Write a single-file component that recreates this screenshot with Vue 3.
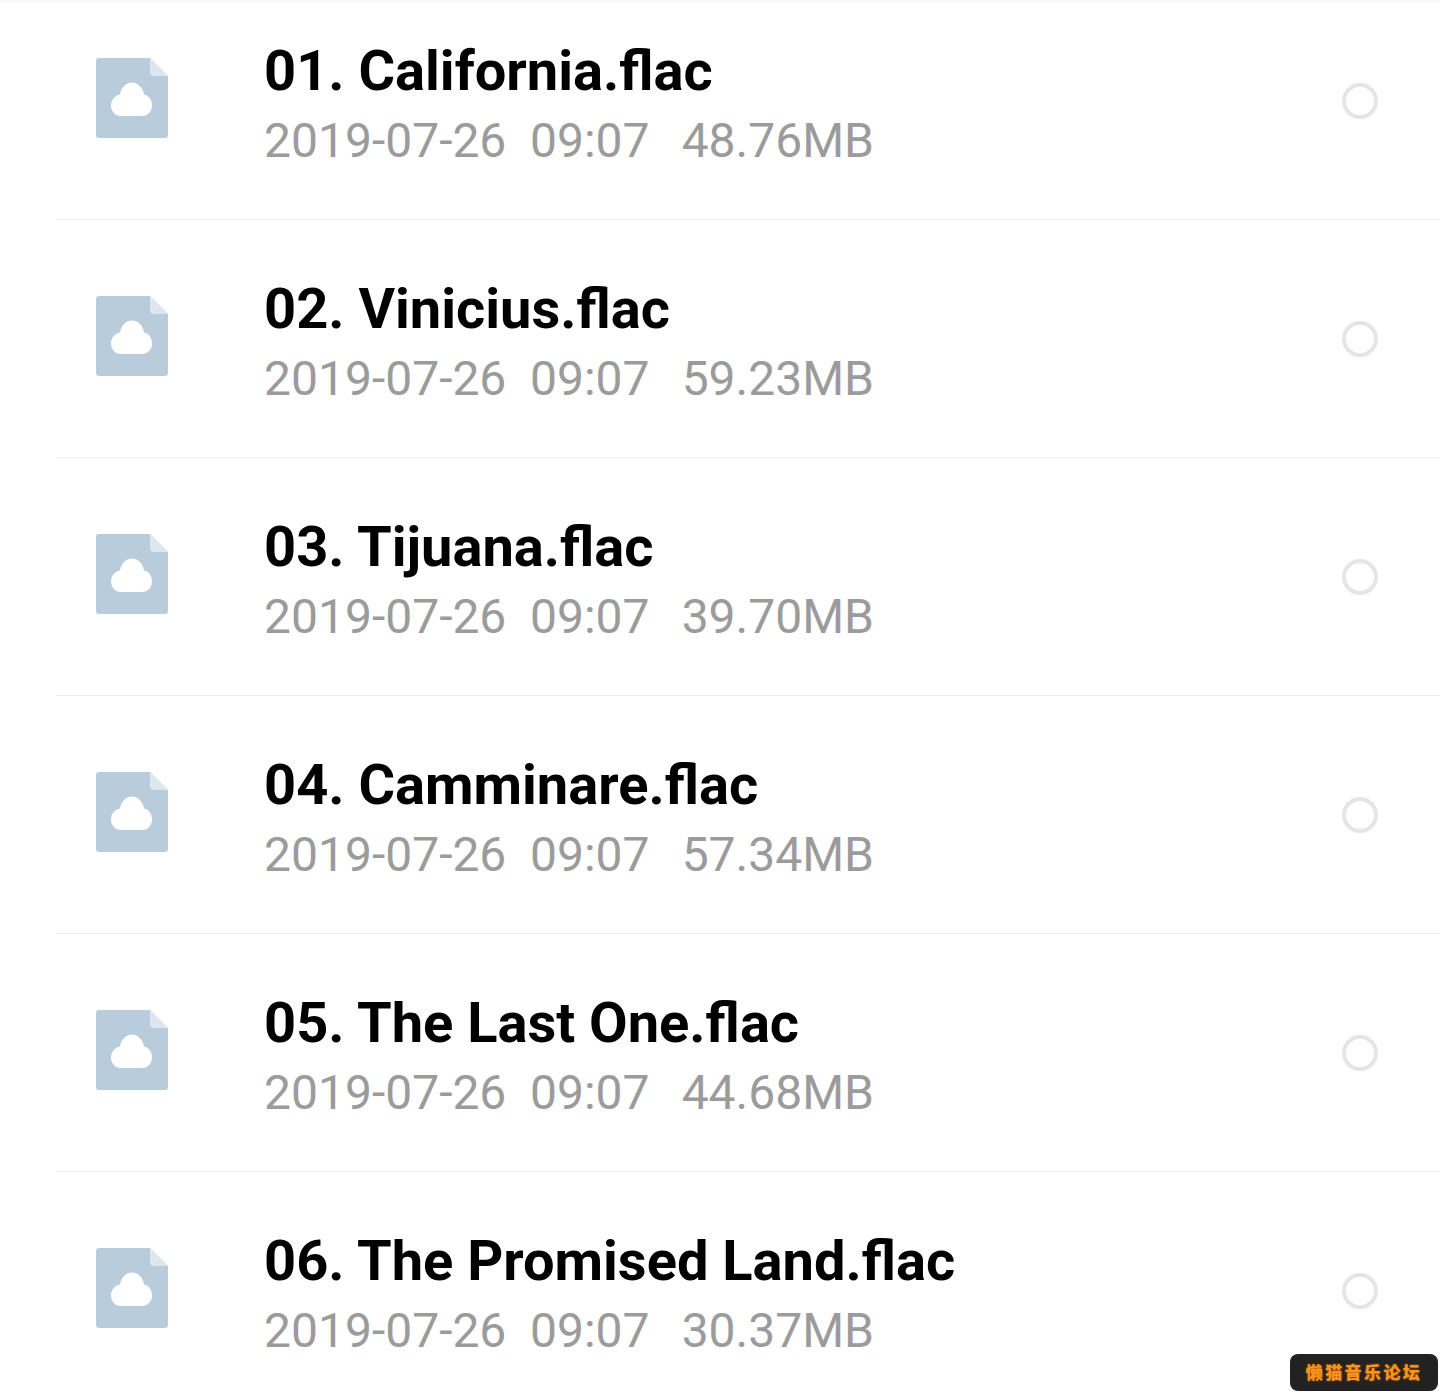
<template>
  <div class="page">
    <div class="top-shade"></div>
    <div class="file-list">
      <div v-for="file in files" :key="file.name" class="file-row">
        <svg class="file-icon" viewBox="0 0 72 80" width="72" height="80">
          <path d="M3 0H54L72 18V77a3 3 0 0 1-3 3H3a3 3 0 0 1-3-3V3a3 3 0 0 1 3-3Z" fill="#b9ccdc" />
          <path d="M54 0L72 18H58a4 4 0 0 1-4-4Z" fill="#dce7f0" />
          <path d="M25 58C19 58 15 53 15 47.500C15 42 19 37.500 24 36.500C25 29.500 30 24.500 36 24.500C42 24.500 47 29.500 48 36.500C53 37.500 56 42 56 47.500C56 53 52 58 46 58Z" fill="#fff" />
        </svg>
        <div class="file-info">
          <div class="file-name">{{ file.name }}</div>
          <div class="file-meta">
            <span class="file-date">2019-07-26</span>
            <span class="file-time">09:07</span>
            <span class="file-size">{{ file.size }}</span>
          </div>
        </div>
        <span class="file-check"></span>
      </div>
    </div>
    <div class="watermark">懒猫音乐论坛</div>
  </div>
</template>

<script setup>
const files = [
  { name: '01. California.flac', size: '48.76MB' },
  { name: '02. Vinicius.flac', size: '59.23MB' },
  { name: '03. Tijuana.flac', size: '39.70MB' },
  { name: '04. Camminare.flac', size: '57.34MB' },
  { name: '05. The Last One.flac', size: '44.68MB' },
  { name: '06. The Promised Land.flac', size: '30.37MB' }
]
</script>

<style>
html,
body {
  background: #fff;
}
</style>

<style scoped>
.page {
  position: relative;
  height: 1392px;
  overflow: hidden;
  background: #fff;
  font-family: Roboto, "Liberation Sans", sans-serif;
}

.top-shade {
  position: absolute;
  top: 0;
  left: 0;
  right: 0;
  height: 3px;
  background: linear-gradient(#f5f5f5, #fff);
}

.file-list {
  margin-top: -18px;
  margin-left: 56px;
}

.file-row {
  display: flex;
  align-items: flex-start;
  height: 238px;
  box-sizing: border-box;
  border-bottom: 1px solid #eeeeee;
}

.file-icon {
  flex: none;
  margin: 76px 0 0 40px;
}

.file-info {
  flex: 1;
  margin: 54px 0 0 96px;
}

.file-name {
  font-size: 56px;
  line-height: 70px;
  font-weight: 700;
  color: #000;
  white-space: nowrap;
}

.file-meta {
  display: flex;
  width: 610px;
  font-size: 48px;
  line-height: 70px;
  color: #9b9b9b;
}

.file-date {
  width: 266px;
}

.file-size {
  margin-left: auto;
}

.file-check {
  flex: none;
  width: 36px;
  height: 36px;
  box-sizing: border-box;
  margin: 101px 62px 0 0;
  border: 4px solid #e5e5e5;
  border-radius: 50%;
}

.watermark {
  position: absolute;
  right: 2px;
  bottom: 1px;
  width: 148px;
  height: 37px;
  border-radius: 8px;
  background: #222222;
  color: #f7931e;
  font-family: "Noto Sans CJK SC", sans-serif;
  font-size: 17px;
  font-weight: 900;
  letter-spacing: 2.4px;
  line-height: 35px;
  text-align: center;
  text-shadow: 0 0 2px #b85c00;
  white-space: nowrap;
}
</style>
